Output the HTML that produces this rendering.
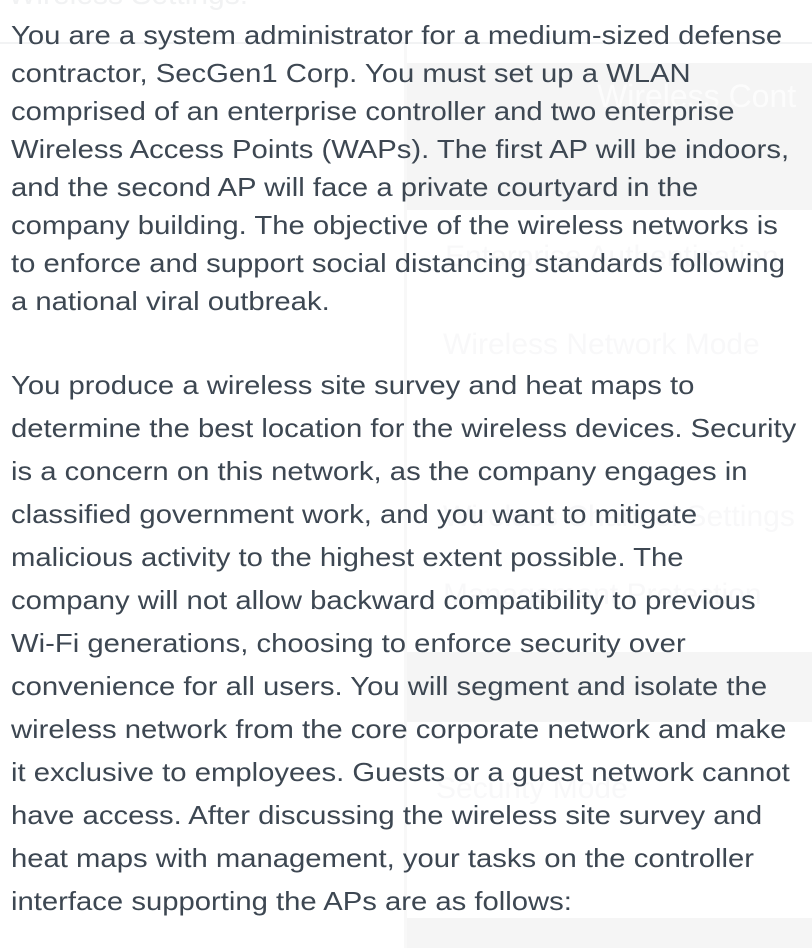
<!DOCTYPE html>
<html><head><meta charset="utf-8"><style>
html,body{margin:0;padding:0;width:812px;height:948px;overflow:hidden;background:#fff;position:relative;font-family:"Liberation Sans",sans-serif;}
.bg{position:absolute;background:#f5f5f5;}
.ft{position:absolute;color:#f8f8f9;font-size:30px;white-space:nowrap;}
.t{position:absolute;left:11px;color:#3d4752;font-size:26px;white-space:nowrap;transform:scaleX(1.125);transform-origin:0 0;}
.t div{height:38px;line-height:38px;}
.t2 div{height:43px;line-height:43px;}
</style></head><body>
<div style="position:absolute;left:0;top:42px;width:812px;height:2px;background:#f2f3f4"></div>
<div style="position:absolute;left:404px;top:44px;width:3px;height:904px;background:#f8f8f8"></div>
<div class="bg" style="left:407px;top:63px;width:405px;height:147px"></div>
<div class="bg" style="left:407px;top:652px;width:405px;height:70px"></div>
<div class="bg" style="left:407px;top:918px;width:405px;height:30px"></div>
<div class="ft" style="left:8px;top:-22px;color:#f1f2f3">Wireless Settings:</div>
<div class="ft" style="left:597px;top:78px;color:#fcfcfc;font-size:32px">Wireless Cont</div>
<div class="ft" style="left:445px;top:240px">Enterprise Authentication</div>
<div class="ft" style="left:443px;top:328px">Wireless Network Mode</div>
<div class="ft" style="left:443px;top:500px">Wireless Channel Settings</div>
<div class="ft" style="left:443px;top:578px">Management Protection</div>
<div class="ft" style="left:436px;top:772px">Security Mode</div>
<div class="t" style="top:16px">
<div>You are a system administrator for a medium-sized defense</div>
<div>contractor, SecGen1 Corp. You must set up a WLAN</div>
<div>comprised of an enterprise controller and two enterprise</div>
<div>Wireless Access Points (WAPs). The first AP will be indoors,</div>
<div>and the second AP will face a private courtyard in the</div>
<div>company building. The objective of the wireless networks is</div>
<div>to enforce and support social distancing standards following</div>
<div>a national viral outbreak.</div>
</div>
<div class="t t2" style="top:364px">
<div>You produce a wireless site survey and heat maps to</div>
<div>determine the best location for the wireless devices. Security</div>
<div>is a concern on this network, as the company engages in</div>
<div>classified government work, and you want to mitigate</div>
<div>malicious activity to the highest extent possible. The</div>
<div>company will not allow backward compatibility to previous</div>
<div>Wi-Fi generations, choosing to enforce security over</div>
<div>convenience for all users. You will segment and isolate the</div>
<div>wireless network from the core corporate network and make</div>
<div>it exclusive to employees. Guests or a guest network cannot</div>
<div>have access. After discussing the wireless site survey and</div>
<div>heat maps with management, your tasks on the controller</div>
<div>interface supporting the APs are as follows:</div>
</div>
</body></html>
